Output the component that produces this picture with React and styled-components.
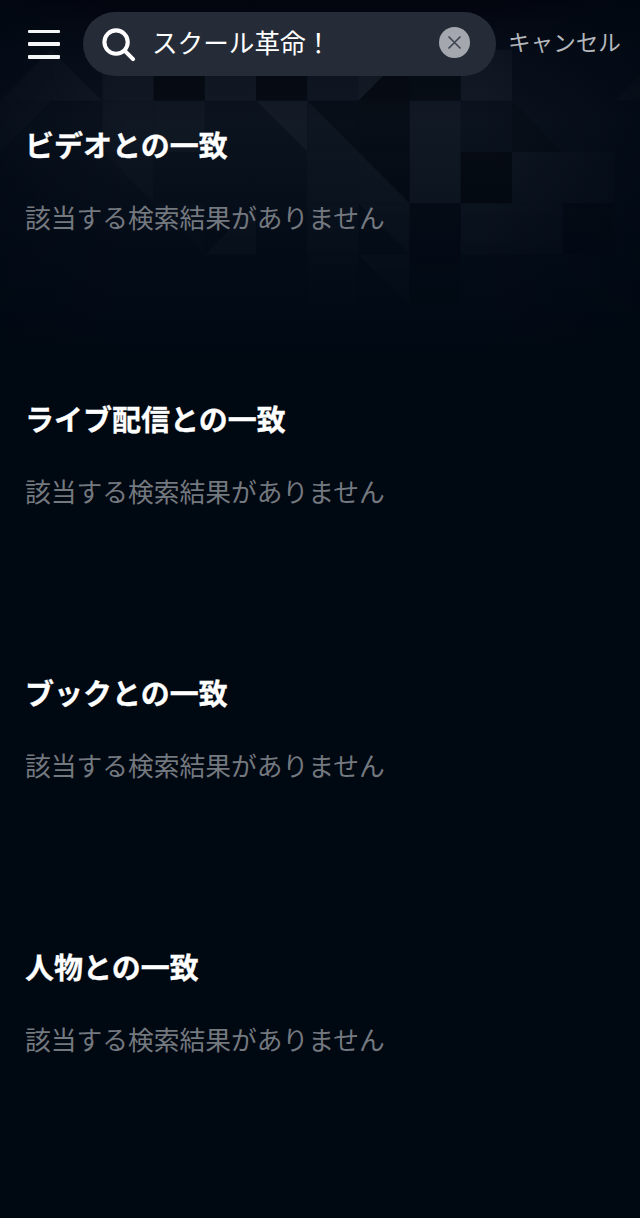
import styled, { createGlobalStyle } from 'styled-components'

const GlobalStyle = createGlobalStyle`
  html, body {
    margin: 0;
    padding: 0;
    background: #000812;
  }
  * {
    box-sizing: border-box;
  }
`

const Page = styled.div`
  position: relative;
  width: 640px;
  height: 1218px;
  overflow: hidden;
  background: #000812;
  font-family: "Noto Sans CJK JP", "Noto Sans", sans-serif;
`

const Backdrop = styled.svg`
  position: absolute;
  top: 0;
  left: 0;
  width: 640px;
  height: 400px;
`

const Content = styled.div`
  position: relative;
`

const TopBar = styled.header`
  display: flex;
  align-items: center;
  height: 88px;
  padding: 0 18px 0 28px;
`

const MenuButton = styled.button`
  display: flex;
  flex-direction: column;
  justify-content: space-between;
  flex: none;
  width: 32px;
  height: 29px;
  padding: 0;
  margin: 0 23px 0 0;
  border: none;
  background: none;
  span {
    display: block;
    height: 3.5px;
    border-radius: 1px;
    background: #f4f5f6;
  }
`

const SearchBox = styled.div`
  display: flex;
  align-items: center;
  width: 413px;
  height: 64px;
  padding: 0 26px 0 18px;
  border-radius: 32px;
  background: #252c38;
`

const SearchIcon = styled.svg`
  flex: none;
  width: 35px;
  height: 35px;
  margin: 0 16px 0 0;
`

const SearchText = styled.div`
  flex: 1;
  margin-bottom: 4px;
  font-size: 25.6px;
  line-height: 1;
  color: #fff;
`

const ClearButton = styled.button`
  display: flex;
  align-items: center;
  justify-content: center;
  flex: none;
  width: 31px;
  height: 31px;
  padding: 0;
  margin-bottom: 4px;
  border: none;
  border-radius: 50%;
  background: #a4a8ae;
`

const Cancel = styled.button`
  flex: none;
  margin: 0 0 3px 12px;
  padding: 0;
  border: none;
  background: none;
  font-family: inherit;
  font-size: 22.6px;
  line-height: 1;
  white-space: nowrap;
  color: #b4b7bc;
`

const Sections = styled.main`
  padding: 0 25px;
`

const Section = styled.section`
  height: 274px;
  padding-top: 39px;
`

const Heading = styled.h2`
  margin: 0 0 39px;
  font-size: 29px;
  font-weight: 700;
  line-height: 34px;
  color: #fff;
  -webkit-text-stroke: 0.3px #fff;
`

const Empty = styled.p`
  margin: 0;
  font-size: 25.76px;
  line-height: 34px;
  color: #74787f;
`

const UNIT = 51.2
const TOP = 49.6
const W = '#fff'
const K = '#000'

// col, row, shape (s = full, a-d = triangle corner), colour, opacity
const tiles = [
  [0, 0, 'c', W, 0.03], [1, 0, 'd', W, 0.03], [2, 0, 's', W, 0.03],
  [3, 0, 's', K, 0.3], [4, 0, 's', W, 0.03], [5, 0, 's', K, 0.3],
  [6, 0, 's', W, 0.025], [7, 0, 'a', W, 0.04], [7, 0, 'c', K, 0.3],
  [8, 0, 's', K, 0.25], [9, 0, 's', W, 0.035], [12, 0, 'c', W, 0.035],
  [0, 1, 'a', W, 0.025], [2, 1, 's', W, 0.025], [3, 1, 's', W, 0.025],
  [5, 1, 'b', W, 0.035], [6, 1, 'b', K, 0.2], [6, 1, 'd', W, 0.015],
  [7, 1, 's', K, 0.25], [8, 1, 's', W, 0.028], [10, 1, 'd', K, 0.15],
  [2, 2, 'b', W, 0.015], [6, 2, 's', W, 0.02], [7, 2, 'b', K, 0.22],
  [7, 2, 'd', W, 0.025], [8, 2, 's', W, 0.028], [9, 2, 's', K, 0.3],
  [10, 2, 's', W, 0.025], [11, 2, 's', W, 0.025],
  [3, 3, 'b', W, 0.012], [4, 3, 'c', W, 0.028], [6, 3, 's', W, 0.018],
  [7, 3, 'b', W, 0.022], [8, 3, 's', K, 0.15], [9, 3, 's', W, 0.022],
  [10, 3, 's', W, 0.022], [11, 3, 's', K, 0.15],
  [0, 4, 's', W, 0.008], [6, 4, 's', W, 0.015], [7, 4, 'b', W, 0.025],
  [8, 4, 's', K, 0.15],
]

const corners = {
  a: [[0, 0], [1, 0], [0, 1]],
  b: [[0, 0], [1, 0], [1, 1]],
  c: [[1, 0], [1, 1], [0, 1]],
  d: [[0, 0], [1, 1], [0, 1]],
  s: [[0, 0], [1, 0], [1, 1], [0, 1]],
}

function tilePoints(col, row, shape) {
  return corners[shape]
    .map(([x, y]) => `${(col + x) * UNIT},${TOP + (row + y) * UNIT}`)
    .join(' ')
}

const groups = ['ビデオ', 'ライブ配信', 'ブック', '人物']

export default function App() {
  return (
    <Page>
      <GlobalStyle />
      <Backdrop viewBox="0 0 640 400">
        <defs>
          <linearGradient id="glow" x1="0" y1="0" x2="0" y2="1">
            <stop offset="0" stopColor="#02040e" />
            <stop offset="0.12" stopColor="#070d18" />
            <stop offset="0.3" stopColor="#0b131f" />
            <stop offset="0.6" stopColor="#040c18" />
            <stop offset="0.92" stopColor="#000812" />
          </linearGradient>
          <linearGradient id="side" x1="0" y1="0" x2="1" y2="0">
            <stop offset="0" stopColor="#000812" stopOpacity="0.55" />
            <stop offset="0.2" stopColor="#000812" stopOpacity="0" />
            <stop offset="0.75" stopColor="#000812" stopOpacity="0" />
            <stop offset="1" stopColor="#000812" stopOpacity="0.7" />
          </linearGradient>
          <linearGradient id="fade" x1="0" y1="0" x2="0" y2="1">
            <stop offset="0" stopColor="#fff" />
            <stop offset="0.5" stopColor="#fff" />
            <stop offset="0.92" stopColor="#000" />
          </linearGradient>
          <mask id="fadeMask">
            <rect width="640" height="400" fill="url(#fade)" />
          </mask>
        </defs>
        <rect width="640" height="400" fill="url(#glow)" />
        <g mask="url(#fadeMask)">
          {tiles.map(([col, row, shape, color, opacity]) => (
            <polygon
              key={`${col}-${row}-${shape}`}
              points={tilePoints(col, row, shape)}
              fill={color}
              fillOpacity={opacity}
            />
          ))}
        </g>
        <rect width="640" height="400" fill="url(#side)" />
      </Backdrop>
      <Content>
        <TopBar>
          <MenuButton aria-label="メニュー">
            <span />
            <span />
            <span />
          </MenuButton>
          <SearchBox>
            <SearchIcon viewBox="0 0 36 36" fill="none" stroke="#fff" strokeWidth="4.2">
              <circle cx="15.5" cy="15.5" r="12" />
              <path d="M24.5 24.5l8.5 8.5" strokeLinecap="round" />
            </SearchIcon>
            <SearchText>スクール革命！</SearchText>
            <ClearButton aria-label="クリア">
              <svg width="15" height="15" viewBox="0 0 15 15" stroke="#3d444f" strokeWidth="1.6" fill="none">
                <path d="M1.5 1.5l12 12M13.5 1.5l-12 12" />
              </svg>
            </ClearButton>
          </SearchBox>
          <Cancel>キャンセル</Cancel>
        </TopBar>
        <Sections>
          {groups.map((name) => (
            <Section key={name}>
              <Heading>{name}との一致</Heading>
              <Empty>該当する検索結果がありません</Empty>
            </Section>
          ))}
        </Sections>
      </Content>
    </Page>
  )
}
